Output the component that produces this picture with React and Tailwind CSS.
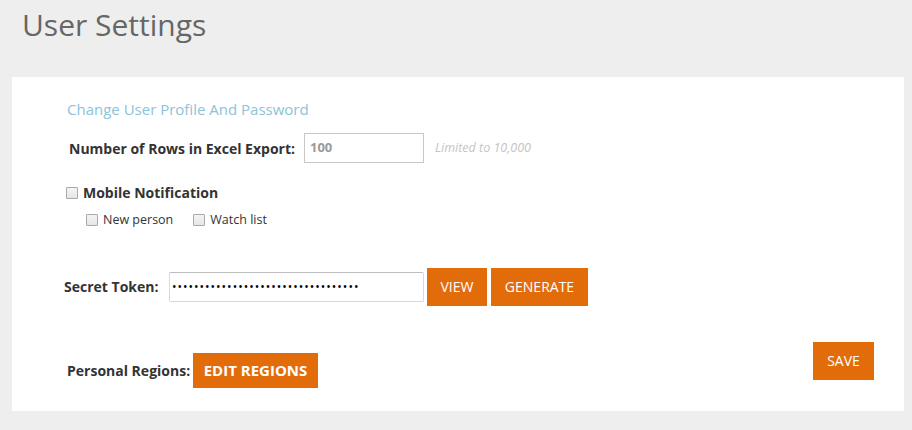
import React from "react";

// Small square checkbox drawn like the legacy browser one
function Box({ size = "w-[12px] h-[12px]" }) {
  return (
    <span
      className={`inline-block ${size} border border-[#a9a9a9] bg-gradient-to-b from-[#f4f4f4] to-[#e6e6e6] rounded-[1px]`}
    />
  );
}

function OrangeButton({ children, className = "" }) {
  return (
    <button
      type="button"
      className={`bg-[#e36c0a] text-white uppercase flex items-center justify-center ${className}`}
    >
      {children}
    </button>
  );
}

export default function App() {
  return (
    <div
      className="min-h-[430px] bg-[#eeeeee] text-[#333333] pb-[20px]"
      style={{ fontFamily: '"Open Sans", "Liberation Sans", sans-serif' }}
    >
      <h1 className="pt-[10px] pl-[22px] text-[30px] leading-[30px] text-[#666666] font-normal">
        User Settings
      </h1>

      {/* Settings panel */}
      <div className="mt-[37px] ml-[12px] mr-[8px] h-[334px] bg-white flex flex-col pl-[52px] pr-[30px] pt-[22px]">
        <a href="#" className="text-[15px] leading-[20px] text-[#8cc3d9] ml-[3px] w-fit">
          Change User Profile And Password
        </a>

        {/* Excel export rows */}
        <div className="flex items-center mt-[14px] ml-[5px]">
          <span className="text-[14px] font-bold w-[235px]">Number of Rows in Excel Export:</span>
          <div className="w-[120px] h-[30px] border border-[#c8c8c8] flex items-center px-[5px] text-[13px] font-bold text-[#999999]">
            100
          </div>
          <span className="ml-[11px] text-[12.5px] italic text-[#c4c4c4]">Limited to 10,000</span>
        </div>

        {/* Mobile notification */}
        <div className="flex items-center gap-[5px] mt-[19px] ml-[2px]">
          <Box size="w-[12px] h-[12px] border-[#8e8e8e]" />
          <span className="text-[14px] font-bold">Mobile Notification</span>
        </div>
        <div className="flex items-center mt-[8px] ml-[22px] text-[12.5px]">
          <label className="flex items-center gap-[5px]">
            <Box />
            <span>New person</span>
          </label>
          <label className="flex items-center gap-[5px] ml-[20px]">
            <Box />
            <span>Watch list</span>
          </label>
        </div>

        {/* Secret token */}
        <div className="flex items-center mt-[38px]">
          <span className="text-[14px] font-bold w-[105px]">Secret Token:</span>
          <div className="w-[255px] h-[30px] border border-[#d9d9d9] border-t-[#bdbdbd] rounded-[2px] flex items-center px-[2px] text-[12px] tracking-[1px] text-black leading-none">
            ••••••••••••••••••••••••••••••••••
          </div>
          <OrangeButton className="ml-[3px] w-[60px] h-[38px] text-[14px]">View</OrangeButton>
          <OrangeButton className="ml-[4px] w-[97px] h-[38px] text-[14px]">Generate</OrangeButton>
        </div>

        {/* Regions and save */}
        <div className="flex items-start justify-between mt-[36px]">
          <div className="flex items-center mt-[11px] ml-[3px]">
            <span className="text-[14px] font-bold w-[126px]">Personal Regions:</span>
            <OrangeButton className="w-[125px] h-[35px] text-[15px] font-bold">Edit Regions</OrangeButton>
          </div>
          <OrangeButton className="w-[61px] h-[38px] text-[14px]">Save</OrangeButton>
        </div>
      </div>
    </div>
  );
}
